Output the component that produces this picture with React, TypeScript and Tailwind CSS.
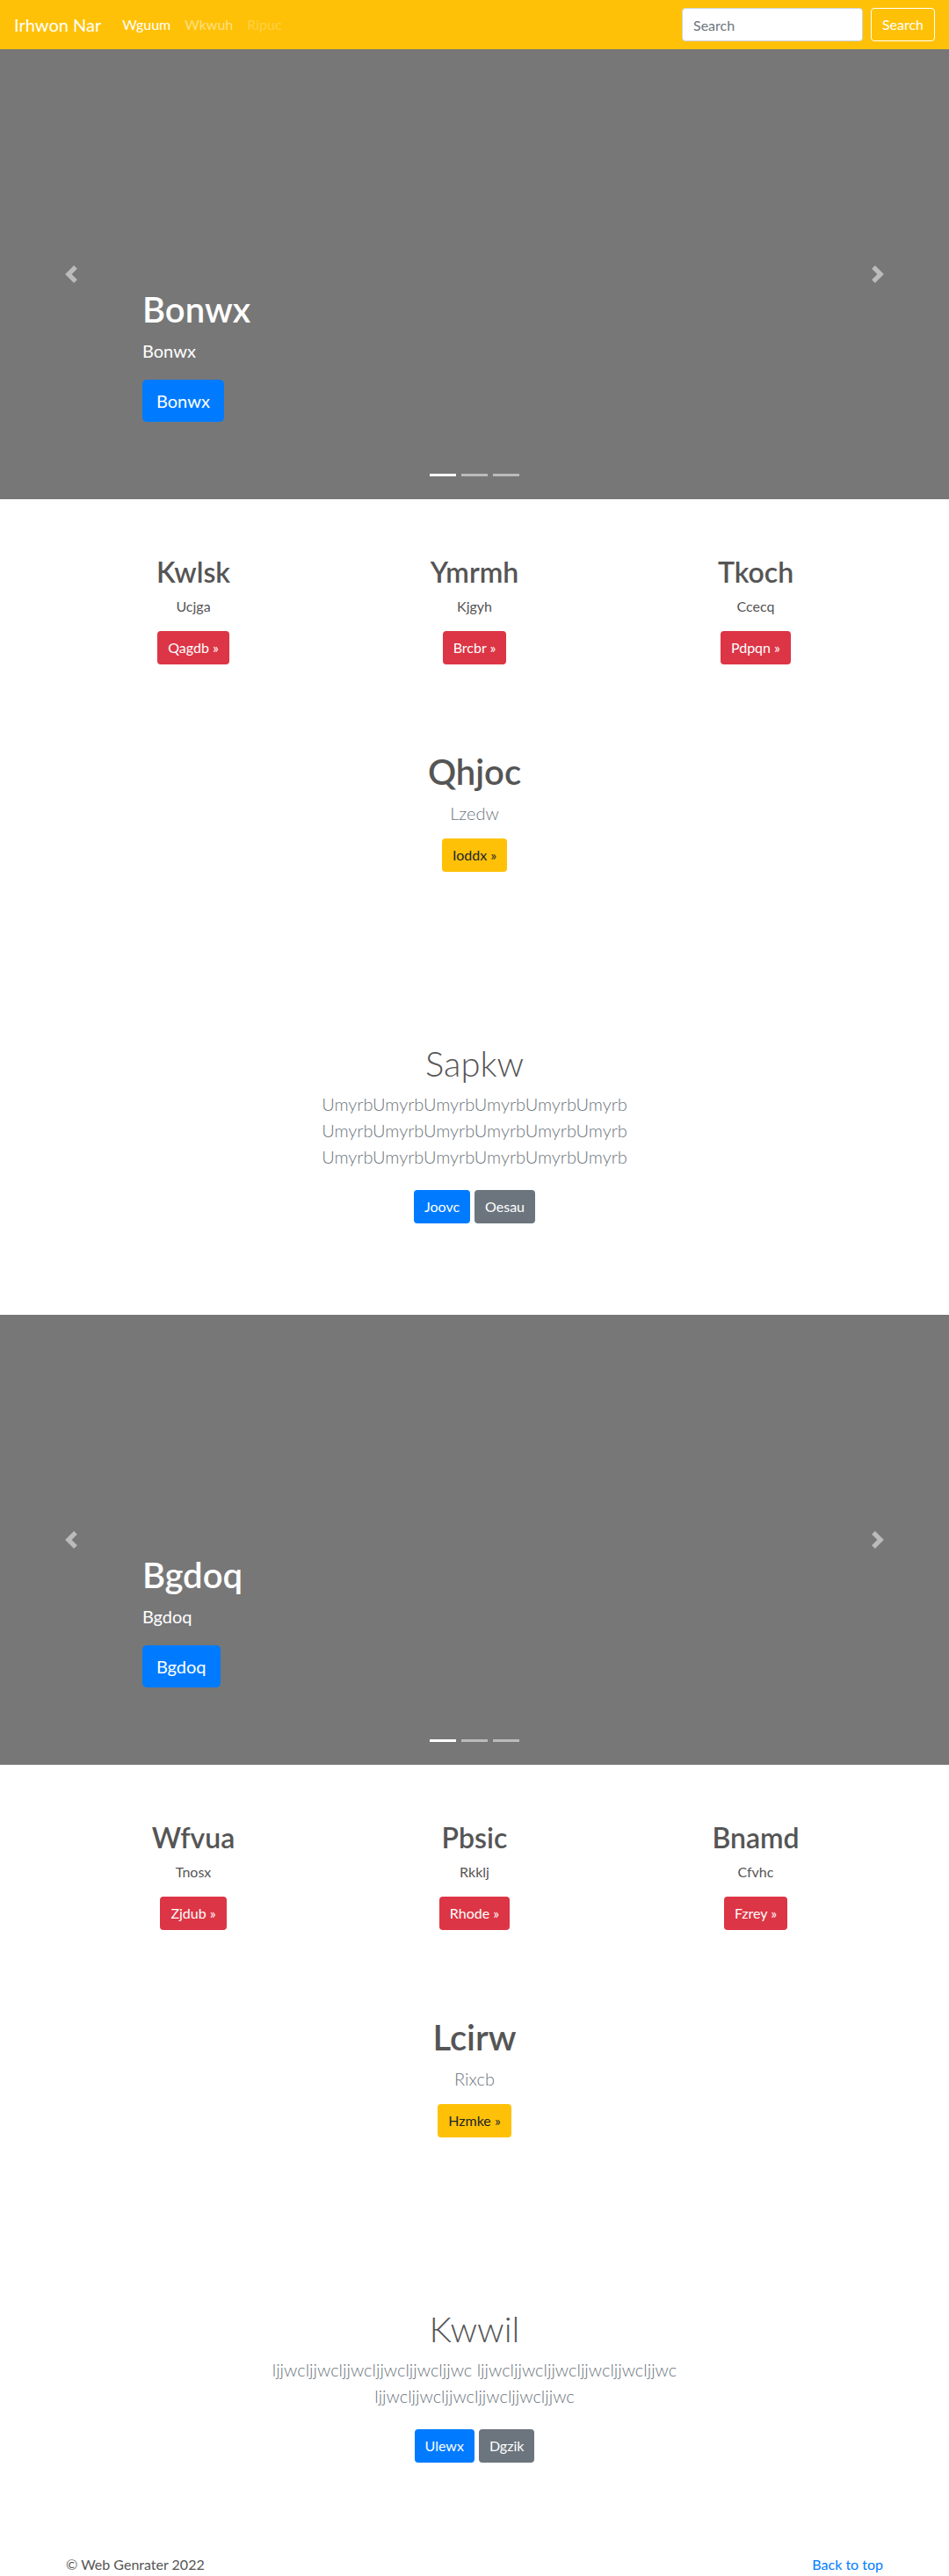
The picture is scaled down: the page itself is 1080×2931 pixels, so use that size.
import React from "react";

type Slide = {
    caption: string;
    cards: { title: string; text: string; button: string }[];
    feature: { title: string; text: string; button: string };
    featurette: { title: string; lines: string[]; primary: string; secondary: string };
};

const slides: Slide[] = [
    {
        caption: "Bonwx",
        cards: [
            { title: "Kwlsk", text: "Ucjga", button: "Qagdb »" },
            { title: "Ymrmh", text: "Kjgyh", button: "Brcbr »" },
            { title: "Tkoch", text: "Ccecq", button: "Pdpqn »" },
        ],
        feature: { title: "Qhjoc", text: "Lzedw", button: "Ioddx »" },
        featurette: {
            title: "Sapkw",
            lines: [
                "UmyrbUmyrbUmyrbUmyrbUmyrbUmyrb",
                "UmyrbUmyrbUmyrbUmyrbUmyrbUmyrb",
                "UmyrbUmyrbUmyrbUmyrbUmyrbUmyrb",
            ],
            primary: "Joovc",
            secondary: "Oesau",
        },
    },
    {
        caption: "Bgdoq",
        cards: [
            { title: "Wfvua", text: "Tnosx", button: "Zjdub »" },
            { title: "Pbsic", text: "Rkklj", button: "Rhode »" },
            { title: "Bnamd", text: "Cfvhc", button: "Fzrey »" },
        ],
        feature: { title: "Lcirw", text: "Rixcb", button: "Hzmke »" },
        featurette: {
            title: "Kwwil",
            lines: [
                "ljjwcljjwcljjwcljjwcljjwcljjwc ljjwcljjwcljjwcljjwcljjwcljjwc",
                "ljjwcljjwcljjwcljjwcljjwcljjwc",
            ],
            primary: "Ulewx",
            secondary: "Dgzik",
        },
    },
];

function Navbar() {
    return (
        <nav className="flex h-14 items-center bg-[#ffc107] pl-4 pr-4">
            <a className="mr-4 text-[20px] leading-[30px] text-white">Irhwon Nar</a>
            <ul className="flex text-base leading-6">
                <li className="px-2 text-white">Wguum</li>
                <li className="px-2 text-[#ffe083]">Wkwuh</li>
                <li className="px-2 text-[#ffd046]">Ripuc</li>
            </ul>
            <form className="ml-auto flex items-center">
                <input
                    placeholder="Search"
                    className="mr-[9px] h-[38px] w-[206px] rounded border border-[#ced4da] bg-white px-3 text-base text-[#495057] placeholder:text-[#6c757d]"
                />
                <button className="h-[38px] w-[73px] rounded border border-white text-base text-white">Search</button>
            </form>
        </nav>
    );
}

function Chevron({ dir }: { dir: "left" | "right" }) {
    return (
        <svg width="20" height="20" viewBox="0 0 8 8" fill="#fff">
            {dir === "left" ? (
                <path d="M5.25 0l-4 4 4 4 1.5-1.5-2.5-2.5 2.5-2.5-1.5-1.5z" />
            ) : (
                <path d="M2.75 0l-1.5 1.5 2.5 2.5-2.5 2.5 1.5 1.5 4-4-4-4z" />
            )}
        </svg>
    );
}

function Carousel({ caption }: { caption: string }) {
    return (
        <div className="relative flex h-[512px] flex-col justify-end bg-[#777] pb-[88px] pl-[162px]">
            <div className="flex flex-col items-start text-white">
                <h1 className="text-[40px] font-semibold leading-[48px]">{caption}</h1>
                <p className="mt-2 text-[20px] leading-[30px]">{caption}</p>
                <a className="mt-[18px] rounded-[5px] bg-[#007bff] px-4 py-[9px] text-[20px] leading-[30px] text-white">
                    {caption}
                </a>
            </div>
            <div className="absolute inset-y-0 left-0 flex w-[15%] items-center justify-center opacity-50">
                <Chevron dir="left" />
            </div>
            <div className="absolute inset-y-0 right-0 flex w-[15%] items-center justify-center opacity-50">
                <Chevron dir="right" />
            </div>
            <div className="absolute inset-x-0 bottom-[26px] flex justify-center gap-[6px]">
                <span className="h-[3px] w-[30px] bg-white" />
                <span className="h-[3px] w-[30px] bg-white/50" />
                <span className="h-[3px] w-[30px] bg-white/50" />
            </div>
        </div>
    );
}

function Section({ slide }: { slide: Slide }) {
    const { cards, feature, featurette } = slide;
    return (
        <div className="mx-auto w-[960px] pt-16">
            <div className="grid grid-cols-3">
                {cards.map((card) => (
                    <div key={card.title} className="flex flex-col items-center px-[15px] text-center">
                        <h2 className="text-[32px] font-semibold leading-[38px] text-[#555]">{card.title}</h2>
                        <p className="mt-2 text-base leading-6 text-[#555]">{card.text}</p>
                        <a className="mt-4 rounded bg-[#dc3545] px-3 py-[7px] text-base leading-6 text-white">
                            {card.button}
                        </a>
                    </div>
                ))}
            </div>

            <div className="mt-[98px] flex flex-col items-center text-center">
                <h1 className="text-[40px] font-semibold leading-[48px] text-[#555]">{feature.title}</h1>
                <p className="mt-2 text-[20px] font-light leading-[30px] text-[#6c757d]">{feature.text}</p>
                <a className="mt-[14px] rounded bg-[#ffc107] px-3 py-[7px] text-base leading-6 text-[#212529]">
                    {feature.button}
                </a>
            </div>

            <div className="mt-[194px] flex flex-col items-center text-center">
                <h2 className="text-[40px] font-light leading-[48px] text-[#555]">{featurette.title}</h2>
                <p className="mt-[7px] text-[20px] font-light leading-[30px] text-[#6c757d]">
                    {featurette.lines.map((line) => (
                        <span key={line} className="block">
                            {line}
                        </span>
                    ))}
                </p>
                <div className="mt-[23px] flex gap-[5px]">
                    <a className="rounded bg-[#007bff] px-3 py-[7px] text-base leading-6 text-white">{featurette.primary}</a>
                    <a className="rounded bg-[#6c757d] px-3 py-[7px] text-base leading-6 text-white">{featurette.secondary}</a>
                </div>
            </div>
        </div>
    );
}

export default function App() {
    return (
        <div className="min-h-screen bg-white font-['Lato',sans-serif]">
            <Navbar />
            {slides.map((slide, i) => (
                <div key={slide.caption} className={i > 0 ? "mt-[104px]" : ""}>
                    <Carousel caption={slide.caption} />
                    <Section slide={slide} />
                </div>
            ))}
            <footer className="mx-auto mt-[104px] flex w-[960px] justify-between px-[15px] pb-4 text-base leading-6">
                <p className="text-[#555]">© Web Genrater 2022</p>
                <a className="text-[#007bff]">Back to top</a>
            </footer>
        </div>
    );
}
